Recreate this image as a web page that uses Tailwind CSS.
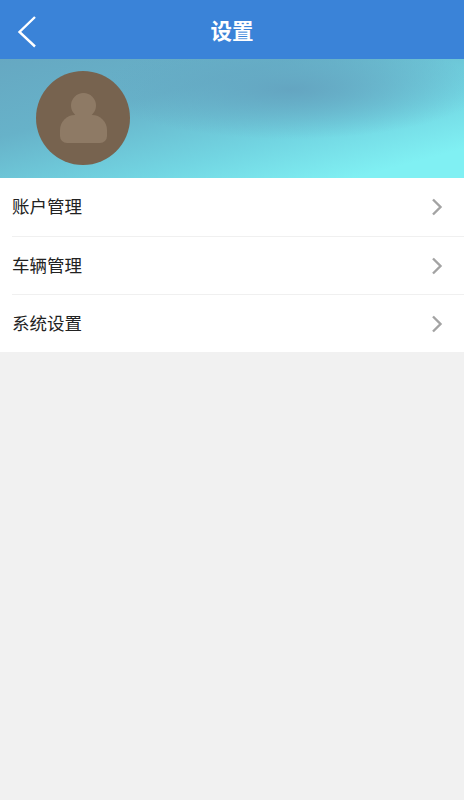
<!DOCTYPE html>
<html lang="zh-CN">
<head>
    <meta charset="UTF-8">
    <meta name="viewport" content="width=device-width, initial-scale=1.0">
    <title>设置</title>
    <script src="https://cdn.jsdelivr.net/npm/@tailwindcss/browser@4"></script>
</head>
<body class="bg-[#f1f1f1] min-h-screen font-['Noto_Sans_CJK_SC','Liberation_Sans',sans-serif]">
    <!-- header -->
    <header class="relative h-[59px] bg-[#3a83d8] flex items-center justify-center pt-[2px]">
        <svg class="absolute left-[14px] top-[13px]" width="26" height="38" viewBox="0 0 26 38" fill="none" stroke="#fff" stroke-width="2.4">
            <path d="M21 4 L5.5 19 L21 33.5"/>
        </svg>
        <h1 class="text-white text-[21.5px] font-bold">设置</h1>
    </header>

    <!-- banner -->
    <div class="h-[119px] pl-[36px] pt-[12px] bg-[radial-gradient(ellipse_190px_50px_at_290px_30px,#64a5c1_0%,rgba(100,165,193,0)_100%),linear-gradient(165deg,#66a8c2_0%,#67b2c9_32%,#72d5e2_64%,#80f0f3_88%)]">
        <div class="w-[94px] h-[94px] rounded-full bg-[#77634f] flex flex-col items-center pt-[22px]">
            <div class="w-[25px] h-[25px] rounded-full bg-[#8e7a65]"></div>
            <div class="w-[47px] h-[28px] -mt-[3px] rounded-t-[15px] rounded-b-[7px] bg-[#8e7a65]"></div>
        </div>
    </div>

    <!-- menu -->
    <ul class="bg-white text-[#222] text-[17.5px]">
        <li class="h-[59px] ml-[12px] pr-[21px] flex items-center justify-between border-b border-[#f0f0f0]">
            <span class="-mt-[1px]">账户管理</span>
            <svg width="12" height="20" viewBox="0 0 12 20" fill="none" stroke="#a3a3a3" stroke-width="2.4"><path d="M2 2.5 L9.5 10 L2 17.5"/></svg>
        </li>
        <li class="h-[58px] ml-[12px] pr-[21px] flex items-center justify-between border-b border-[#f0f0f0]">
            <span>车辆管理</span>
            <svg width="12" height="20" viewBox="0 0 12 20" fill="none" stroke="#a3a3a3" stroke-width="2.4"><path d="M2 2.5 L9.5 10 L2 17.5"/></svg>
        </li>
        <li class="h-[57px] ml-[12px] pr-[21px] flex items-center justify-between">
            <span>系统设置</span>
            <svg width="12" height="20" viewBox="0 0 12 20" fill="none" stroke="#a3a3a3" stroke-width="2.4"><path d="M2 2.5 L9.5 10 L2 17.5"/></svg>
        </li>
    </ul>
</body>
</html>
